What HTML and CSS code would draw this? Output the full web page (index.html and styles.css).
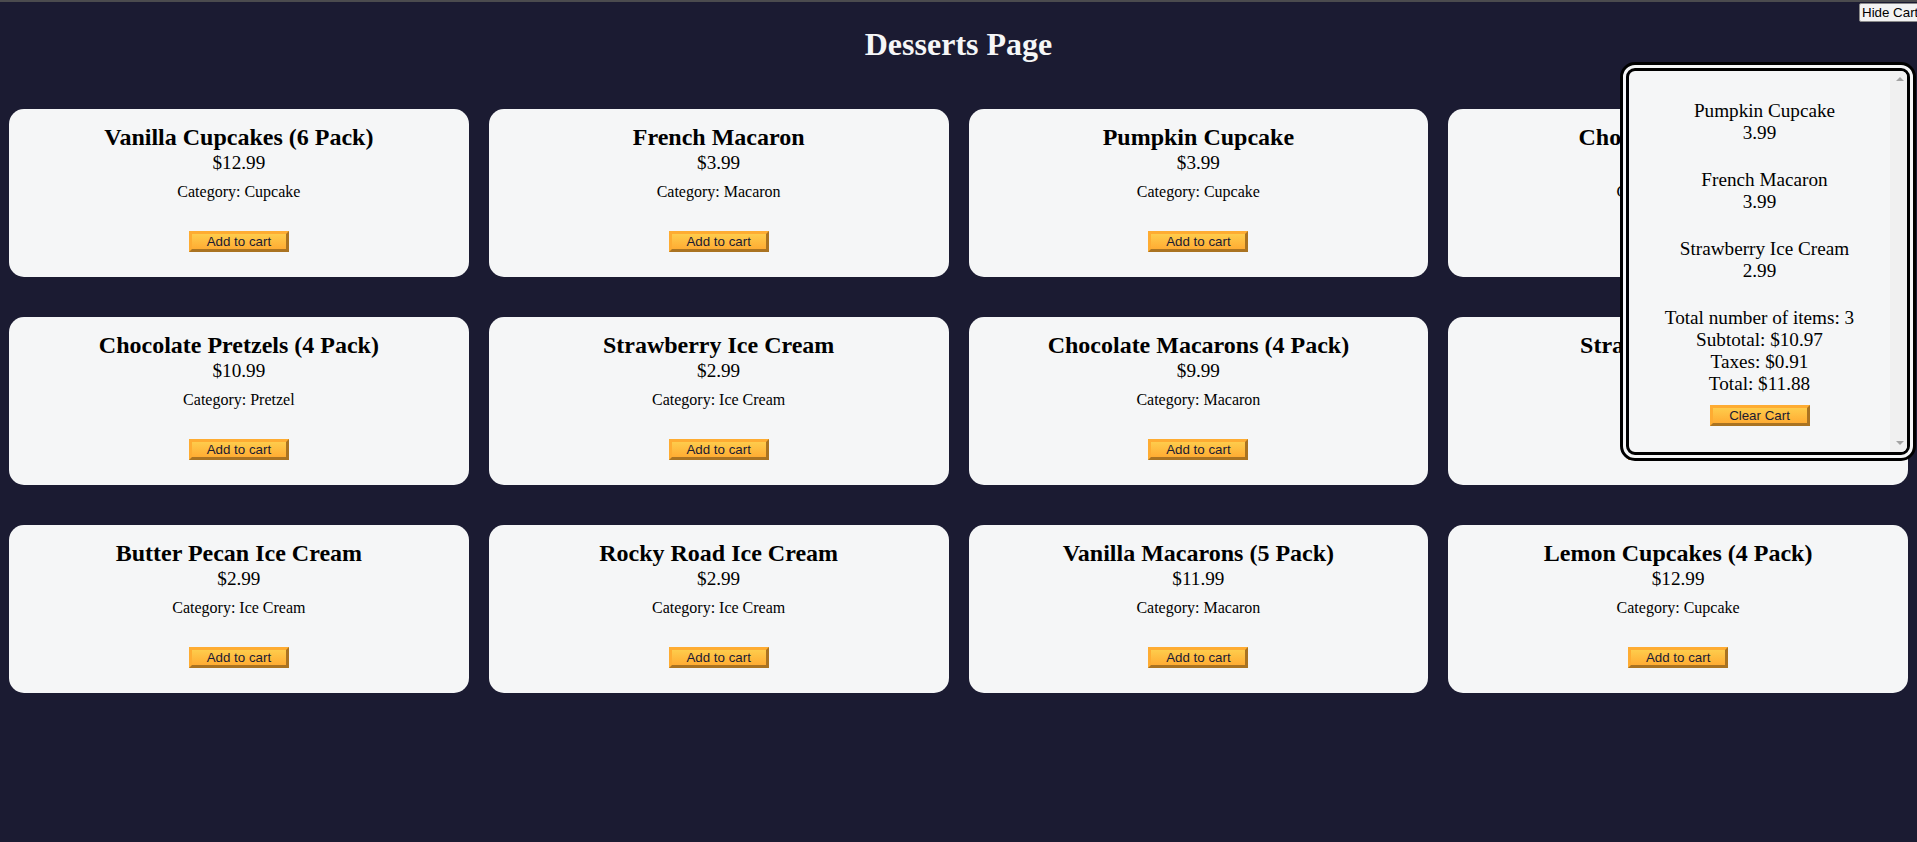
FILE: index.html
```html
<!DOCTYPE html>
<html lang="en">
<head>
<meta charset="UTF-8">
<title>Desserts Page</title>
<link rel="stylesheet" href="styles.css">
</head>
<body>
<header>
  <h1 class="title">Desserts Page</h1>
</header>
<main>
  <button class="cart-btn" type="button">Hide Cart</button>
  <div class="cart">
    <div class="cart-content">
      <div class="products">
        <div class="product"><p><span class="product-count"></span>Pumpkin Cupcake</p><p>3.99</p></div>
        <div class="product"><p><span class="product-count"></span>French Macaron</p><p>3.99</p></div>
        <div class="product"><p><span class="product-count"></span>Strawberry Ice Cream</p><p>2.99</p></div>
      </div>
      <p>Total number of items: 3</p>
      <p>Subtotal: $10.97</p>
      <p>Taxes: $0.91</p>
      <p>Total: $11.88</p>
      <button class="btn clear-btn" type="button">Clear Cart</button>
    </div>
    <div class="scrollbar"><span class="arrow up"></span><span class="arrow down"></span></div>
  </div>
  <div class="cards">
    <div class="card"><h2>Vanilla Cupcakes (6 Pack)</h2><p class="price">$12.99</p><p class="category">Category: Cupcake</p><button class="btn add-btn" type="button">Add to cart</button></div>
    <div class="card"><h2>French Macaron</h2><p class="price">$3.99</p><p class="category">Category: Macaron</p><button class="btn add-btn" type="button">Add to cart</button></div>
    <div class="card"><h2>Pumpkin Cupcake</h2><p class="price">$3.99</p><p class="category">Category: Cupcake</p><button class="btn add-btn" type="button">Add to cart</button></div>
    <div class="card"><h2>Chocolate Cupcake</h2><p class="price">$5.99</p><p class="category">Category: Cupcake</p><button class="btn add-btn" type="button">Add to cart</button></div>
    <div class="card"><h2>Chocolate Pretzels (4 Pack)</h2><p class="price">$10.99</p><p class="category">Category: Pretzel</p><button class="btn add-btn" type="button">Add to cart</button></div>
    <div class="card"><h2>Strawberry Ice Cream</h2><p class="price">$2.99</p><p class="category">Category: Ice Cream</p><button class="btn add-btn" type="button">Add to cart</button></div>
    <div class="card"><h2>Chocolate Macarons (4 Pack)</h2><p class="price">$9.99</p><p class="category">Category: Macaron</p><button class="btn add-btn" type="button">Add to cart</button></div>
    <div class="card"><h2>Strawberry Pretzel</h2><p class="price">$4.99</p><p class="category">Category: Pretzel</p><button class="btn add-btn" type="button">Add to cart</button></div>
    <div class="card"><h2>Butter Pecan Ice Cream</h2><p class="price">$2.99</p><p class="category">Category: Ice Cream</p><button class="btn add-btn" type="button">Add to cart</button></div>
    <div class="card"><h2>Rocky Road Ice Cream</h2><p class="price">$2.99</p><p class="category">Category: Ice Cream</p><button class="btn add-btn" type="button">Add to cart</button></div>
    <div class="card"><h2>Vanilla Macarons (5 Pack)</h2><p class="price">$11.99</p><p class="category">Category: Macaron</p><button class="btn add-btn" type="button">Add to cart</button></div>
    <div class="card"><h2>Lemon Cupcakes (4 Pack)</h2><p class="price">$12.99</p><p class="category">Category: Cupcake</p><button class="btn add-btn" type="button">Add to cart</button></div>
  </div>
</main>
</body>
</html>
```

FILE: styles.css
```css
* {
  margin: 0;
  padding: 0;
  box-sizing: border-box;
}

html,
body {
  overflow: hidden;
}

body {
  position: relative;
  min-height: 842px;
  background-color: #1b1b32;
  border-top: 2px solid #4b4b4e;
  font-family: "Liberation Serif", "Times New Roman", serif;
  color: #000;
}

.title {
  color: #f5f6f7;
  text-align: center;
  font-size: 32px;
  font-weight: bold;
  margin: 24px 0 25px;
}

.cards {
  display: grid;
  grid-template-columns: repeat(4, 1fr);
  column-gap: 20px;
  row-gap: 40px;
  padding: 21px 9px 0;
}

.card {
  background-color: #f5f6f7;
  border-radius: 15px;
  padding: 15px;
  text-align: center;
}

.card h2 {
  font-size: 24px;
  font-weight: bold;
}

.price {
  font-size: 19.2px;
  margin-top: 1px;
}

.category {
  font-size: 16px;
  margin: 9px 0;
}

.btn {
  display: block;
  width: 100px;
  padding: 0 6px;
  font-family: "Liberation Sans", Arial, sans-serif;
  font-size: 13.333px;
  color: #1b1b32;
  background-color: #feac32;
  background-image: linear-gradient(#fecc4c, #ffac33);
  border: 3px outset #feac32;
  cursor: pointer;
}

.add-btn {
  margin: 30px auto 10px;
}

.cart-btn {
  position: absolute;
  top: 1px;
  left: 1859px;
  padding: 1px 2px;
  font-family: "Liberation Sans", Arial, sans-serif;
  font-size: 13.333px;
  color: #000;
  background-color: #f3f3f3;
  border: 1px solid #8a8a8a;
  border-radius: 2px;
  white-space: nowrap;
  z-index: 3;
}

.cart {
  position: absolute;
  top: 60px;
  left: 1620px;
  width: 296px;
  height: 399px;
  display: flex;
  background-color: #f5f6f7;
  border: 9px double #000;
  border-radius: 15px;
  overflow: hidden;
  text-align: center;
  font-size: 19.2px;
  z-index: 2;
}

.cart-content {
  flex: 1;
  padding-top: 4px;
}

.product {
  margin: 25px 0;
}

.product-count {
  display: inline-block;
  margin-right: 10px;
}

.clear-btn {
  margin: 10px auto 0;
}

.scrollbar {
  width: 17px;
  background-color: #f0f0f0;
  display: flex;
  flex-direction: column;
  justify-content: space-between;
  align-items: center;
  padding: 6px 0 7px 3px;
}

.arrow {
  width: 0;
  height: 0;
  border-left: 4px solid transparent;
  border-right: 4px solid transparent;
}

.arrow.up {
  border-bottom: 4px solid #a3a3a3;
}

.arrow.down {
  border-top: 4px solid #a3a3a3;
}
```
